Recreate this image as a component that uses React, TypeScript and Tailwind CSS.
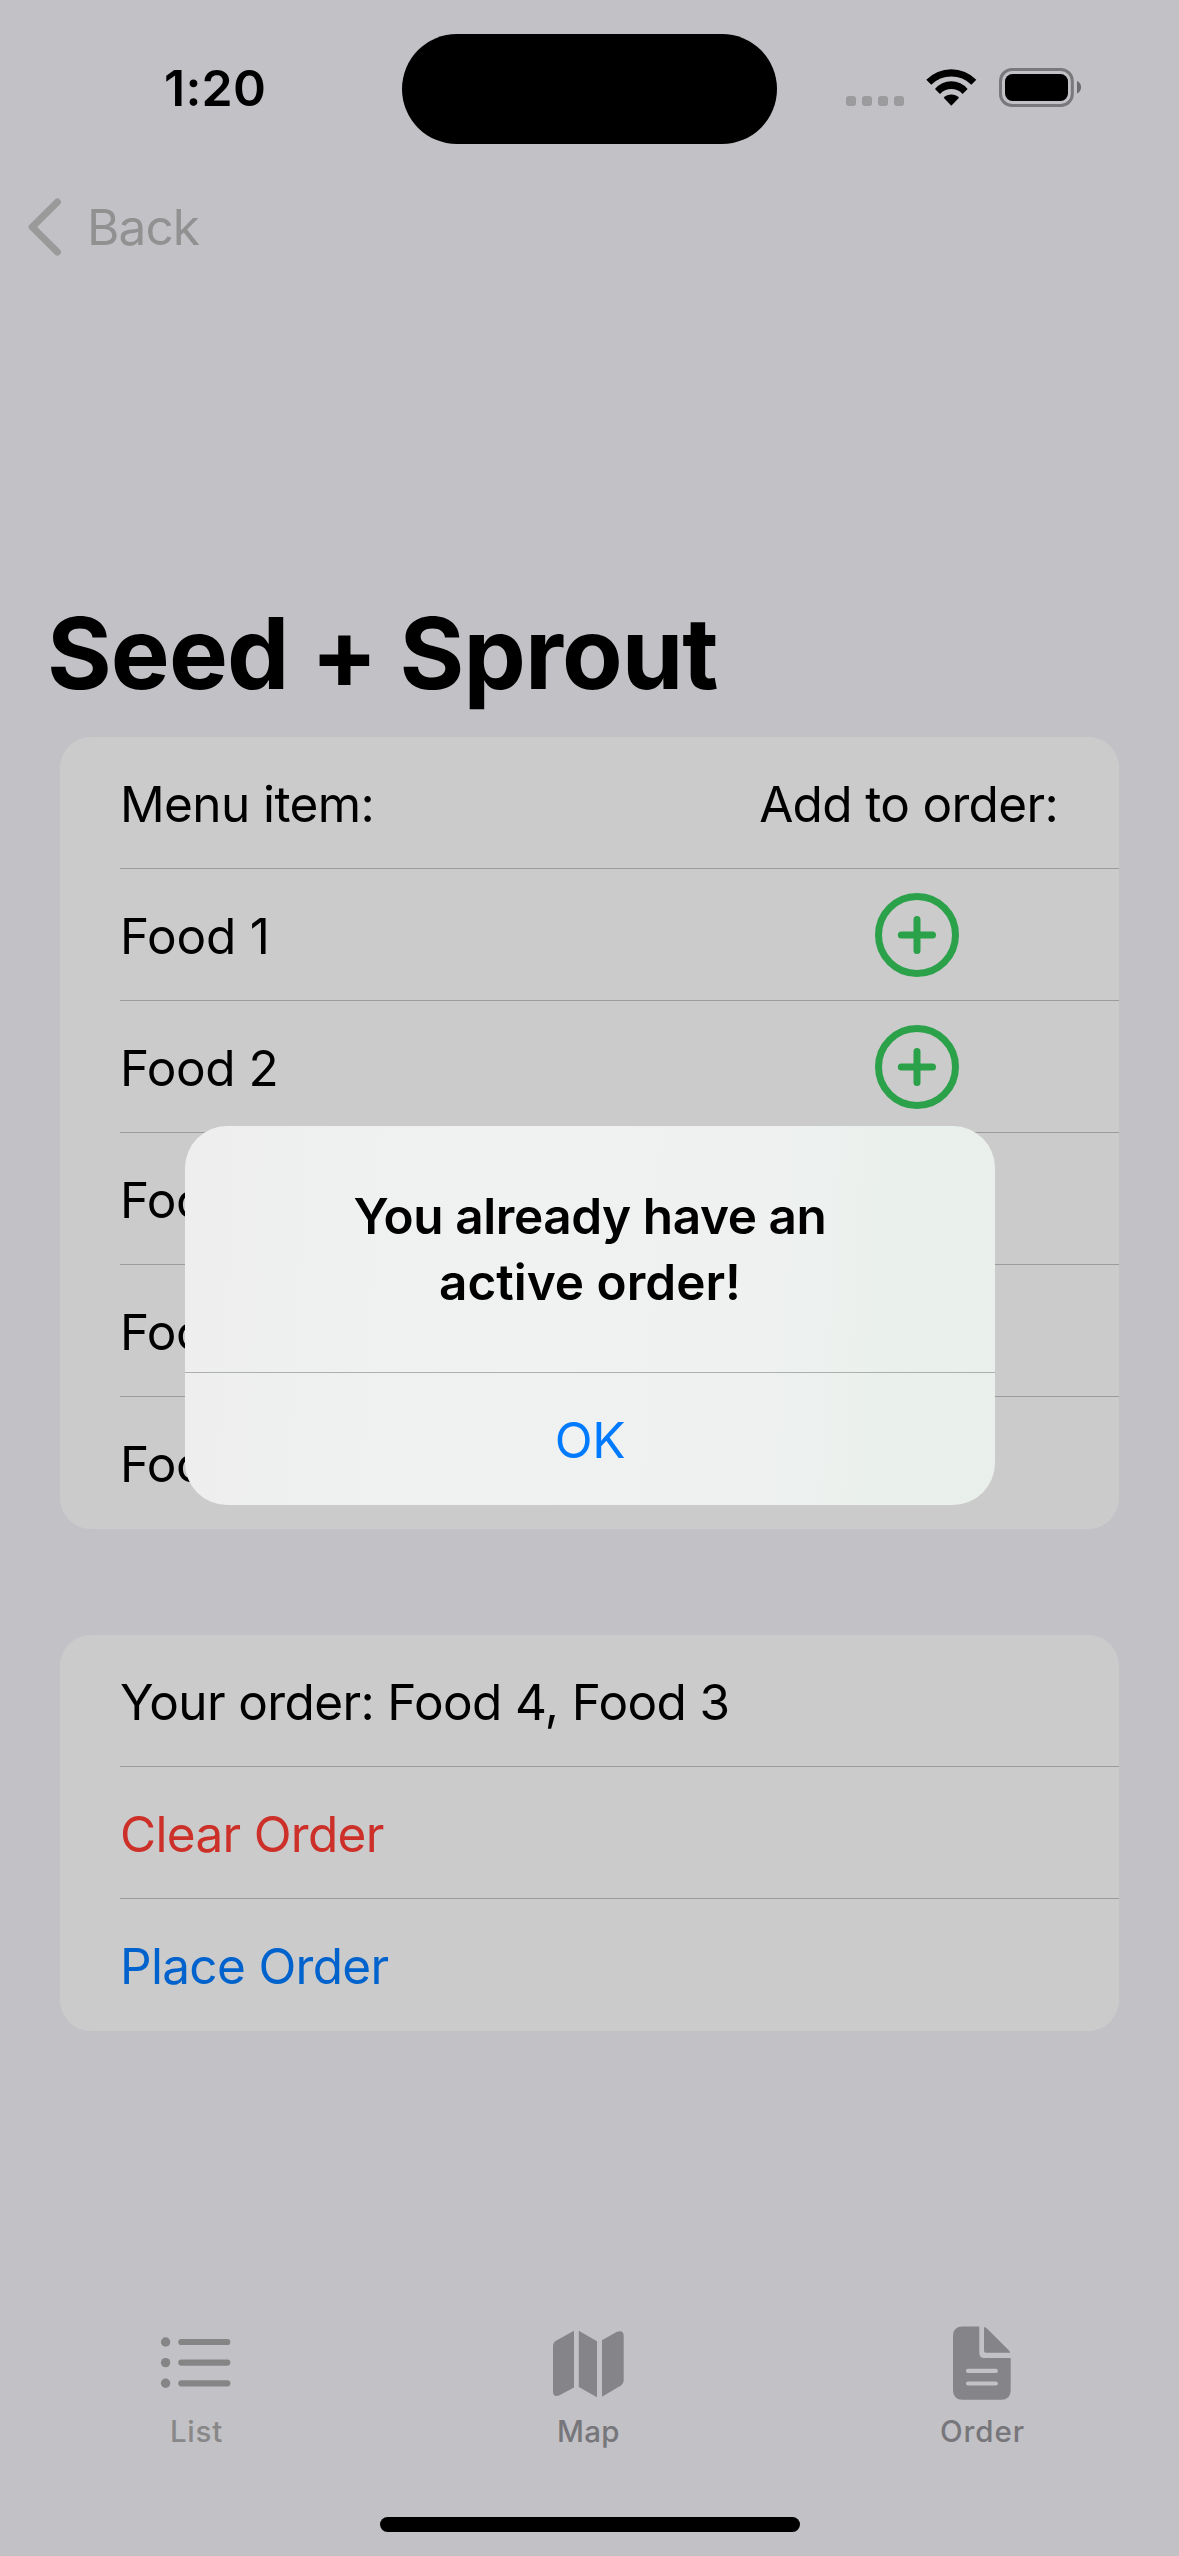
import type { ReactNode } from "react";

function StatusBar() {
  return (
    <header className="flex h-[177px] shrink-0 items-start">
      <div className="flex h-full w-[402px] items-center pb-[2px] pl-[164px]">
        <span className="text-[50px] leading-[60px] font-semibold tracking-[0.25px]">1:20</span>
      </div>
      <div className="mt-[33.5px] h-[110.5px] w-[375px] rounded-full bg-black" />
      <div className="flex h-[39px] flex-1 items-end pl-[69px] mt-[68px]">
        <div className="mb-px flex gap-[6px]">
          {[0, 1, 2, 3].map((n) => (
            <span key={n} className="size-[10px] rounded-[3px] bg-[#9b9b9e]" />
          ))}
        </div>
        <svg className="mb-px ml-[22px]" width="51" height="37" viewBox="0 0 51 37">
          <path d="M0.3 10.7A35 35 0 0 1 50.3 10.7L45.3 15.8A28 28 0 0 0 5.3 15.8Z" />
          <path d="M9 20A21 21 0 0 1 41.6 20L36.6 25A15.3 15.3 0 0 0 14 25Z" />
          <path d="M17.7 28.7A10.5 10.5 0 0 1 33 28.7L25.3 36.8Z" />
        </svg>
        <svg className="ml-[22px]" width="83" height="39" viewBox="0 0 83 39">
          <rect x="1.5" y="1.5" width="71.8" height="36" rx="11.5" fill="none" stroke="#79797c" strokeWidth="3" />
          <rect x="6" y="6" width="63" height="27" rx="7.5" />
          <path d="M78 13C83.4 15 83.4 23.5 78 25.5Z" fill="#6c6c6f" />
        </svg>
      </div>
    </header>
  );
}

function Row({ children, last = false }: { children: ReactNode; last?: boolean }) {
  return (
    <div
      className={`ml-[60px] flex h-[132px] items-center justify-between border-b pt-[3px] pr-[60px] ${
        last ? "border-transparent" : "border-[#9b9b9d]"
      }`}
    >
      {children}
    </div>
  );
}

function AddButton() {
  return (
    <button className="-mt-[3px] mr-[100px]" aria-label="Add">
      <svg width="84" height="84" viewBox="0 0 84 84" fill="none" stroke="#2ba14a" strokeWidth="7" strokeLinecap="round">
        <circle cx="42" cy="42" r="38.5" />
        <path d="M26.3 42h31.2M42 26.4v31.2" />
      </svg>
    </button>
  );
}

function ListIcon() {
  return (
    <svg width="85" height="90" viewBox="0 0 85 90" fill="#858585">
      {[24, 44.6, 65.3].map((y) => (
        <g key={y}>
          <circle cx="11.6" cy={y} r="4.7" />
          <rect x="24.2" y={y - 3.1} width="52.2" height="6.2" rx="3.1" />
        </g>
      ))}
    </svg>
  );
}

function MapIcon() {
  return (
    <svg width="85" height="90" viewBox="0 0 85 90" fill="#858489">
      <path d="M27 12.8V69.4L12 77.6Q6 79.5 6 73.5V28Q6 24.6 9 22.8Z" />
      <path d="M31.8 12.8L50 23.2V79.2L31.8 69Z" />
      <path d="M55 22.2L69.5 13.9Q76.7 11.5 76.7 18V62.5Q76.7 65.6 74 67.4L55 78.8Z" />
    </svg>
  );
}

function OrderIcon() {
  return (
    <svg width="85" height="90" viewBox="0 0 85 90" fill="#858489">
      <path d="M22.5 8.6H39.3V35Q39.3 40 44.3 40H70.7V72.2Q70.7 81.7 61.2 81.7H22.5Q13 81.7 13 72.2V18.1Q13 8.6 22.5 8.6Z" />
      <path d="M44 9.6Q44 8.6 45 9.2Q46.5 10 48 11.5L68 31.5Q70.6 34 70 34.8H46Q44 34.8 44 32.8Z" />
      <path d="M28 52.9H55.8M28 65.5H55.8" stroke="#c2c1c6" strokeWidth="4.2" strokeLinecap="round" />
    </svg>
  );
}

function TabBar() {
  return (
    <nav className="grid grid-cols-3 text-[29.5px] leading-[39px] font-medium">
      <div className="flex flex-col items-center gap-[4px] text-[#888888]">
        <ListIcon />
        <span className="tracking-[0.8px]">List</span>
      </div>
      <div className="flex flex-col items-center gap-[4px] text-[#77767b]">
        <MapIcon />
        <span className="pr-[2px] tracking-[0.3px]">Map</span>
      </div>
      <div className="flex flex-col items-center gap-[4px] text-[#77767b]">
        <OrderIcon />
        <span className="tracking-[0.95px]">Order</span>
      </div>
    </nav>
  );
}

function Alert() {
  return (
    <div
      role="alertdialog"
      className="absolute top-[1126px] left-[185px] w-[810px] overflow-hidden rounded-[42px] bg-linear-[93deg,#eeeeef_0%,#eff0f0_22%,#f0f1f1_45%,#eef1f0_72%,#eaf0ec_88%,#e9f0ec_100%] text-center"
    >
      <h2 className="pt-[57px] pb-[57px] leading-[66px] font-semibold">
        <span className="block tracking-[-0.42px]">You already have an</span>
        <span className="block">active order!</span>
      </h2>
      <button className="block h-[133px] w-full border-t border-[#acb0ae] pt-[2px] tracking-[-0.35px] text-[#007aff]">
        OK
      </button>
    </div>
  );
}

export default function App() {
  return (
    <div className="relative flex h-[2556px] w-[1179px] flex-col overflow-hidden bg-[#c2c1c6] font-['Inter',sans-serif] text-[49.5px] leading-[60px] text-black">
      <StatusBar />

      <div className="flex h-[100px] shrink-0 items-center pl-[28px] text-[#919191]">
        <svg width="34" height="58" viewBox="0 0 34 58" fill="none" stroke="#9a9a9b" strokeWidth="7" strokeLinecap="round" strokeLinejoin="round">
          <path d="M29.4 4L4.2 29L29.4 54" />
        </svg>
        <span className="ml-[25px] tracking-[-0.9px]">Back</span>
      </div>

      <h1 className="mt-[316px] pl-[47px] text-[99px] leading-[120px] font-bold tracking-[-0.95px]">Seed + Sprout</h1>

      <section className="mx-[60px] mt-[24px] rounded-[31px] bg-[#cbcbcb]">
        <Row>
          <span className="tracking-[-0.6px]">Menu item:</span>
          <span className="pr-px tracking-[-0.67px]">Add to order:</span>
        </Row>
        <Row>
          <span className="tracking-[-0.2px]">Food 1</span>
          <AddButton />
        </Row>
        <Row>
          <span className="tracking-[-0.45px]">Food 2</span>
          <AddButton />
        </Row>
        <Row>
          <span className="tracking-[-0.45px]">Food 3</span>
          <AddButton />
        </Row>
        <Row>
          <span className="tracking-[-0.45px]">Food 4</span>
          <AddButton />
        </Row>
        <Row last>
          <span className="tracking-[-0.45px]">Food 5</span>
          <AddButton />
        </Row>
      </section>

      <section className="mx-[60px] mt-[106px] rounded-[31px] bg-[#cbcbcb]">
        <Row>
          <span className="tracking-[-0.62px]">Your order: Food 4, Food 3</span>
        </Row>
        <Row>
          <button className="tracking-[-0.7px] text-[#cc3028]">Clear Order</button>
        </Row>
        <Row last>
          <button className="tracking-[-0.68px] text-[#0062cc]">Place Order</button>
        </Row>
      </section>

      <div className="mt-auto">
        <TabBar />
        <div className="mx-auto mt-[66px] mb-[24px] h-[15px] w-[420px] rounded-full bg-black" />
      </div>

      <Alert />
    </div>
  );
}
